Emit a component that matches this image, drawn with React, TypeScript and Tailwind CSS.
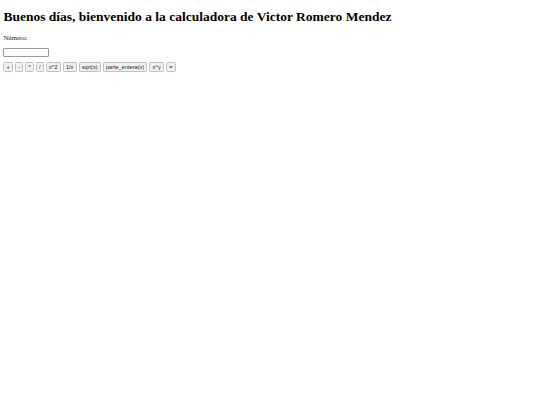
import React from "react";

const ops = ["+", "-", "*", "/", "x^2", "1/x", "sqrt(x)", "parte_entera(x)", "x^y", "="];

export default function App() {
  return (
    <div className="min-h-[405px] w-[540px] bg-white px-[3.4px] pt-[9px] text-black" style={{ fontFamily: '"Liberation Serif", serif' }}>
      <h1 className="m-0 text-[13.5px] font-bold leading-[15.5px]" style={{ fontFamily: '"Liberation Serif", serif' }}>
        Buenos días, bienvenido a la calculadora de Victor Romero Mendez
      </h1>
      <p className="mt-[9px] text-[6.75px] leading-[7.7px] text-[#222]">Número:</p>
      <div className="mt-[6.7px]">
        <input
          type="text"
          className="block h-[9px] w-[46px] rounded-[1px] border border-[#9a9a9a] bg-white p-0 outline-none"
        />
      </div>
      <div className="mt-[5.5px] flex gap-[2px]" style={{ fontFamily: '"Liberation Sans", Arial, sans-serif' }}>
        {ops.map((o) => (
          <button
            key={o}
            className="h-[10px] rounded-[1.5px] border border-[#c0c0c0] bg-[#f0f0f0] px-[2.2px] text-[5.6px] leading-[8px] text-[#222]"
          >
            {o}
          </button>
        ))}
      </div>
    </div>
  );
}
